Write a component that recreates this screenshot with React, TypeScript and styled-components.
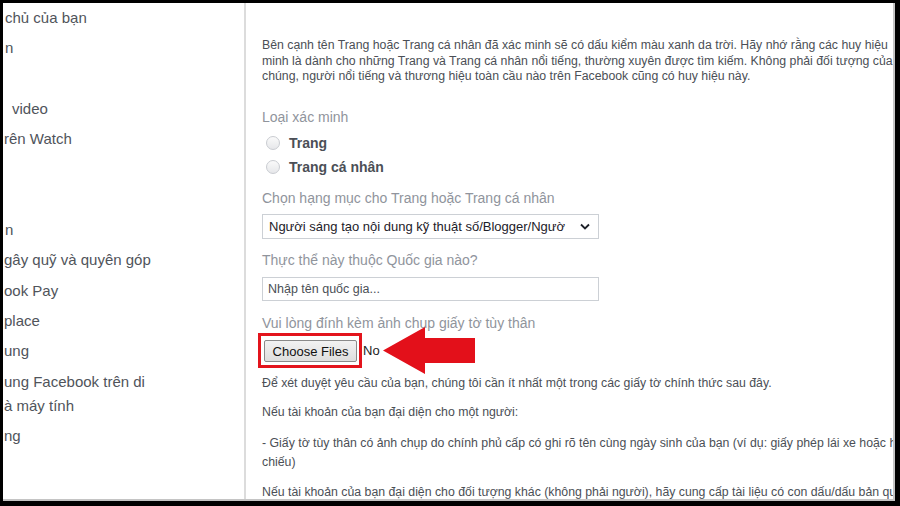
import styled, { createGlobalStyle } from 'styled-components';

const GlobalStyle = createGlobalStyle`
    html, body {
        margin: 0;
        padding: 0;
        background: #000;
    }
    * {
        box-sizing: border-box;
    }
`;

const Frame = styled.div`
    width: 900px;
    height: 506px;
    background: #000;
    padding: 3px 5px 5px 3px;
    overflow: hidden;
`;

const Panel = styled.div`
    display: grid;
    grid-template-columns: 241px 2px 1fr;
    height: 100%;
    background: #fff;
    border-right: 2px solid #c4c4c4;
    border-bottom: 2px solid #c4c4c4;
    font-family: 'Liberation Sans', Arial, sans-serif;
    overflow: hidden;
`;

const Sidebar = styled.nav`
    display: flex;
    flex-direction: column;
    overflow: hidden;
`;

const NavItem = styled.div<{ $indent?: number; $wrap?: boolean }>`
    padding: ${(p) => (p.$wrap ? '3px 0' : '6px 0')};
    padding-left: ${(p) => p.$indent ?? 0}px;
    font-size: 15px;
    line-height: ${(p) => (p.$wrap ? '24px' : '18.3px')};
    color: #50545b;
    white-space: nowrap;
    min-height: 30.3px;
`;

const Divider = styled.div`
    background: #dcdcdc;
`;

const Content = styled.main`
    padding: 35px 0 0 16px;
    overflow: hidden;
    color: #4b4f56;
`;

const Intro = styled.div`
    font-size: 12.3px;
    line-height: 15.5px;
`;

const Line = styled.div`
    white-space: nowrap;
`;

const FieldLabel = styled.div<{ $mt: number }>`
    margin-top: ${(p) => p.$mt}px;
    font-size: 14px;
    line-height: 18px;
    color: #90949c;
    white-space: nowrap;
`;

const RadioGroup = styled.div`
    margin-top: 5px;
    display: flex;
    flex-direction: column;
`;

const RadioRow = styled.label`
    display: flex;
    align-items: center;
    gap: 9px;
    height: 24px;
    padding-left: 4px;
`;

const RadioDot = styled.span`
    width: 14px;
    height: 14px;
    border-radius: 50%;
    border: 1px solid #c9ccd1;
    background: linear-gradient(#fafafa, #e6e7ea);
`;

const RadioText = styled.span`
    font-size: 14px;
    font-weight: bold;
    color: #4b4f56;
`;

const SelectBox = styled.div`
    margin-top: 7px;
    width: 337px;
    height: 25px;
    border: 1px solid #ccd0d5;
    display: flex;
    align-items: center;
    justify-content: space-between;
    padding: 0 8px 0 6px;
    font-size: 13px;
    color: #1d2129;
    white-space: nowrap;
    overflow: hidden;
`;

const InputBox = styled.div`
    margin-top: 8px;
    width: 337px;
    height: 24px;
    border: 1px solid #ccd0d5;
    display: flex;
    align-items: center;
    padding: 0 5px;
    font-size: 12.5px;
    color: #4b4f56;
`;

const FileRow = styled.div`
    position: relative;
    margin-top: 1px;
    display: flex;
    align-items: center;
    height: 35px;
`;

const Highlight = styled.div`
    margin-left: -4px;
    border: 3px solid #e3141c;
    padding: 4px 2px 3px 3px;
`;

const FileButton = styled.button`
    width: 93px;
    height: 22px;
    padding: 0;
    border: 1px solid #8a8a8a;
    border-radius: 2px;
    background: linear-gradient(#f2f2f2, #dedede);
    font-family: 'Liberation Sans', Arial, sans-serif;
    font-size: 13px;
    color: #111;
`;

const FileStatus = styled.span`
    margin-left: 1px;
    font-size: 13px;
    color: #222;
`;

const Arrow = styled.svg`
    position: absolute;
    left: 121px;
    top: -6px;
`;

const Note = styled.div<{ $mt: number; $lh?: number }>`
    margin-top: ${(p) => p.$mt}px;
    font-size: 12.3px;
    line-height: ${(p) => p.$lh ?? 16}px;
    white-space: nowrap;
`;

const navItems: { text: string; indent?: number }[] = [
    { text: 'chủ của bạn', indent: 2 },
    { text: 'n', indent: 2 },
    { text: '\u00a0' },
    { text: 'video', indent: 9 },
    { text: 'rên Watch', indent: 1 },
    { text: '\u00a0' },
    { text: '\u00a0' },
    { text: 'n', indent: 2 },
    { text: 'gây quỹ và quyên góp', indent: 1 },
    { text: 'ook Pay', indent: 1 },
    { text: 'place', indent: 1 },
    { text: 'ung', indent: 1 },
];

const App = () => {
    return (
        <>
            <GlobalStyle />
            <Frame>
                <Panel>
                    <Sidebar>
                        {navItems.map((item, i) => (
                            <NavItem key={i} $indent={item.indent}>
                                {item.text}
                            </NavItem>
                        ))}
                        <NavItem $wrap $indent={1}>
                            ung Facebook trên di
                            <br />
                            à máy tính
                        </NavItem>
                        <NavItem $indent={1}>ng</NavItem>
                    </Sidebar>
                    <Divider />
                    <Content>
                        <Intro>
                            <Line>
                                Bên cạnh tên Trang hoặc Trang cá nhân đã xác minh sẽ có dấu kiểm màu xanh da trời. Hãy nhớ rằng các huy hiệu
                            </Line>
                            <Line>
                                minh là dành cho những Trang và Trang cá nhân nổi tiếng, thường xuyên được tìm kiếm. Không phải đối tượng của
                            </Line>
                            <Line>chúng, người nổi tiếng và thương hiệu toàn cầu nào trên Facebook cũng có huy hiệu này.</Line>
                        </Intro>

                        <FieldLabel $mt={23.5}>Loại xác minh</FieldLabel>
                        <RadioGroup>
                            <RadioRow>
                                <RadioDot />
                                <RadioText>Trang</RadioText>
                            </RadioRow>
                            <RadioRow>
                                <RadioDot />
                                <RadioText>Trang cá nhân</RadioText>
                            </RadioRow>
                        </RadioGroup>

                        <FieldLabel $mt={10}>Chọn hạng mục cho Trang hoặc Trang cá nhân</FieldLabel>
                        <SelectBox>
                            <span>Người sáng tạo nội dung kỹ thuật số/Blogger/Ngườ</span>
                            <svg width='10' height='7' viewBox='0 0 10 7'>
                                <path d='M1 1.5 L5 5.5 L9 1.5' fill='none' stroke='#1d2129' strokeWidth='1.8' />
                            </svg>
                        </SelectBox>

                        <FieldLabel $mt={12}>Thực thể này thuộc Quốc gia nào?</FieldLabel>
                        <InputBox>Nhập tên quốc gia...</InputBox>

                        <FieldLabel $mt={13}>Vui lòng đính kèm ảnh chụp giấy tờ tùy thân</FieldLabel>
                        <FileRow>
                            <Highlight>
                                <FileButton>Choose Files</FileButton>
                            </Highlight>
                            <FileStatus>No</FileStatus>
                            <Arrow width='93' height='47' viewBox='0 0 93 47'>
                                <polygon points='0,23.5 42,0 42,11 92,11 92,36 42,36 42,47' fill='#e3101a' />
                            </Arrow>
                        </FileRow>

                        <Note $mt={7}>
                            Để xét duyệt yêu cầu của bạn, chúng tôi cần ít nhất một trong các giấy tờ chính thức sau đây.
                        </Note>
                        <Note $mt={13}>Nếu tài khoản của bạn đại diện cho một người:</Note>
                        <Note $mt={13.5} $lh={19}>
                            - Giấy tờ tùy thân có ảnh chụp do chính phủ cấp có ghi rõ tên cùng ngày sinh của bạn (ví dụ: giấy phép lái xe hoặc hộ
                            <br />
                            chiếu)
                        </Note>
                        <Note $mt={12.5}>
                            Nếu tài khoản của bạn đại diện cho đối tượng khác (không phải người), hãy cung cấp tài liệu có con dấu/dấu bản quyền
                        </Note>
                    </Content>
                </Panel>
            </Frame>
        </>
    );
};

export default App;
